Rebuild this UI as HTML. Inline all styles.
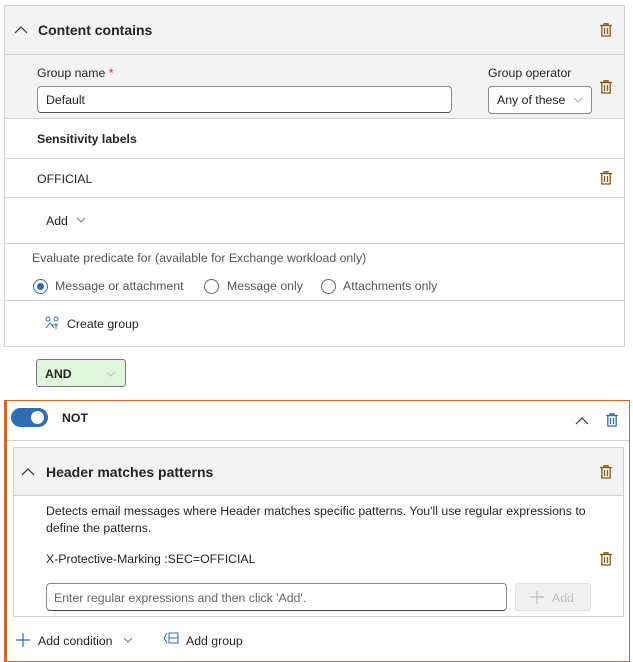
<!DOCTYPE html>
<html><head><style>
*{box-sizing:border-box;margin:0;padding:0}
body{width:633px;height:662px;background:#fff;font-family:"Liberation Sans",sans-serif;font-size:12.3px;color:#242424;position:relative;overflow:hidden}
.a{position:absolute}
.t{position:absolute;white-space:nowrap}
.ln{position:absolute;height:1px;background:#d1d1d1}
svg{position:absolute}
</style></head><body>
<div class="a" style="left:4px;top:5px;width:621px;height:342px;border:1px solid #d1d1d1"></div>
<div class="a" style="left:5px;top:6px;width:619px;height:112px;background:#f3f3f3"></div>
<div class="ln" style="left:5px;top:54px;width:619px"></div>
<svg style="left:14px;top:25px" width="14" height="10"><path d="M1 8 L7 2 L13 8" fill="none" stroke="#333" stroke-width="1.2"/></svg>
<div class="t" style="left:38px;top:22px;font-weight:bold;font-size:14px">Content contains</div>
<div class="t" style="left:37px;top:66px">Group name <span style="color:#c4314b">*</span></div>
<div class="a" style="left:37px;top:86px;width:415px;height:27px;border:1px solid #8a8a8a;border-bottom-color:#555;border-radius:4px;background:#fff"></div>
<div class="t" style="left:46px;top:93px">Default</div>
<div class="t" style="left:488px;top:66px">Group operator</div>
<div class="a" style="left:488px;top:86px;width:104px;height:28px;border:1px solid #8a8a8a;border-radius:4px;background:#fff"></div>
<div class="t" style="left:497px;top:93px">Any of these</div>
<svg style="left:573px;top:97px" width="10" height="6"><path d="M1 1 L5 5 L9 1" fill="none" stroke="#aaa"/></svg>
<div class="ln" style="left:5px;top:118px;width:619px"></div>
<div class="t" style="left:37px;top:132px;font-weight:bold">Sensitivity labels</div>
<div class="ln" style="left:5px;top:158px;width:619px"></div>
<div class="t" style="left:37px;top:172px">OFFICIAL</div>
<div class="ln" style="left:5px;top:197px;width:619px"></div>
<div class="t" style="left:46px;top:214px">Add</div>
<svg style="left:76px;top:217px" width="10" height="6"><path d="M1 1 L5 5 L9 1" fill="none" stroke="#777"/></svg>
<div class="ln" style="left:5px;top:243px;width:619px"></div>
<div class="t" style="left:32px;top:251px;color:#555">Evaluate predicate for (available for Exchange workload only)</div>
<div class="a" style="left:33px;top:279px;width:15px;height:15px;border:1px solid #2f6cb5;border-radius:50%"></div>
<div class="a" style="left:37px;top:283px;width:7px;height:7px;background:#2f6cb5;border-radius:50%"></div>
<div class="t" style="left:55px;top:279px;color:#555">Message or attachment</div>
<div class="a" style="left:204px;top:279px;width:15px;height:15px;border:1px solid #666;border-radius:50%"></div>
<div class="t" style="left:227px;top:279px;color:#555">Message only</div>
<div class="a" style="left:321px;top:279px;width:15px;height:15px;border:1px solid #666;border-radius:50%"></div>
<div class="t" style="left:343px;top:279px;color:#555">Attachments only</div>
<div class="ln" style="left:5px;top:300px;width:619px"></div>
<svg style="left:44px;top:316px" width="16" height="14"><g fill="none" stroke="#2f6cb5" stroke-width="1"><circle cx="4" cy="3" r="2"/><circle cx="12" cy="3" r="2"/><path d="M2 12 L6 7 L10 12 M8 9 H14 M12 7 V13"/></g></svg>
<div class="t" style="left:67px;top:317px">Create group</div>
<div class="a" style="left:36px;top:359px;width:90px;height:28px;background:#dff6dd;border:1px solid #7a7a7a;border-radius:3px"></div>
<div class="t" style="left:45px;top:367px;font-weight:bold">AND</div>
<svg style="left:106px;top:371px" width="10" height="6"><path d="M1 1 L5 5 L9 1" fill="none" stroke="#bbb"/></svg>
<div class="a" style="left:4px;top:400px;width:626px;height:262px;border:1px solid #d9661f;border-left:3px solid #d9661f"></div>
<div class="a" style="left:11px;top:408px;width:37px;height:19px;background:#2f6cb5;border-radius:10px"></div>
<div class="a" style="left:31px;top:411px;width:13px;height:13px;background:#fff;border-radius:50%"></div>
<div class="t" style="left:62px;top:411px;font-weight:bold">NOT</div>
<svg style="left:575px;top:416px" width="14" height="9"><path d="M1 8 L7 2 L13 8" fill="none" stroke="#333" stroke-width="1.2"/></svg>
<div class="ln" style="left:7px;top:440px;width:622px"></div>
<div class="a" style="left:13px;top:447px;width:611px;height:170px;border:1px solid #d1d1d1"></div>
<div class="a" style="left:14px;top:448px;width:609px;height:48px;background:#f3f3f3;border-bottom:1px solid #d1d1d1"></div>
<svg style="left:21px;top:467px" width="14" height="9"><path d="M1 8 L7 2 L13 8" fill="none" stroke="#333" stroke-width="1.2"/></svg>
<div class="t" style="left:46px;top:464px;font-weight:bold;font-size:14px">Header matches patterns</div>
<div class="t" style="left:46px;top:503px;line-height:17px">Detects email messages where Header matches specific patterns. You'll use regular expressions to<br>define the patterns.</div>
<div class="t" style="left:46px;top:552px">X-Protective-Marking :SEC=OFFICIAL</div>
<div class="a" style="left:46px;top:583px;width:461px;height:28px;border:1px solid #8a8a8a;border-bottom-color:#444;border-radius:4px"></div>
<div class="t" style="left:54px;top:591px;color:#666">Enter regular expressions and then click 'Add'.</div>
<div class="a" style="left:515px;top:583px;width:76px;height:28px;background:#f0f0f0;border:1px solid #e0e0e0;border-radius:3px"></div>
<svg style="left:530px;top:590px" width="14" height="14"><path d="M7 0 V14 M0 7 H14" stroke="#bdbdbd" stroke-width="1.2"/></svg>
<div class="t" style="left:552px;top:591px;color:#bdbdbd">Add</div>
<svg style="left:16px;top:633px" width="14" height="14"><path d="M7 0 V14 M0 7 H14" stroke="#2f6cb5" stroke-width="1.2"/></svg>
<div class="t" style="left:38px;top:634px">Add condition</div>
<svg style="left:123px;top:637px" width="10" height="6"><path d="M1 1 L5 5 L9 1" fill="none" stroke="#777"/></svg>
<svg style="left:163px;top:632px" width="16" height="12"><g fill="none" stroke="#2f6cb5"><path d="M4 1 L1 6 L4 11"/><rect x="6" y="1" width="9" height="10"/><path d="M6 6 H15"/></g></svg>
<div class="t" style="left:186px;top:634px">Add group</div>
<svg style="left:600px;top:23px" width="12" height="14"><g fill="none" stroke="#8b5a14" stroke-width="1.3"><path d="M0 2.5 H12 M4 2.5 V0.8 H8 V2.5"/><rect x="1.8" y="2.5" width="8.4" height="10.5"/><path d="M4.5 5 V11 M7.5 5 V11"/></g></svg>
<svg style="left:600px;top:80px" width="12" height="14"><g fill="none" stroke="#8b5a14" stroke-width="1.3"><path d="M0 2.5 H12 M4 2.5 V0.8 H8 V2.5"/><rect x="1.8" y="2.5" width="8.4" height="10.5"/><path d="M4.5 5 V11 M7.5 5 V11"/></g></svg>
<svg style="left:600px;top:171px" width="12" height="14"><g fill="none" stroke="#8b5a14" stroke-width="1.3"><path d="M0 2.5 H12 M4 2.5 V0.8 H8 V2.5"/><rect x="1.8" y="2.5" width="8.4" height="10.5"/><path d="M4.5 5 V11 M7.5 5 V11"/></g></svg>
<svg style="left:606px;top:413px" width="12" height="14"><g fill="none" stroke="#2f6cb5" stroke-width="1.3"><path d="M0 2.5 H12 M4 2.5 V0.8 H8 V2.5"/><rect x="1.8" y="2.5" width="8.4" height="10.5"/><path d="M4.5 5 V11 M7.5 5 V11"/></g></svg>
<svg style="left:600px;top:465px" width="12" height="14"><g fill="none" stroke="#8b5a14" stroke-width="1.3"><path d="M0 2.5 H12 M4 2.5 V0.8 H8 V2.5"/><rect x="1.8" y="2.5" width="8.4" height="10.5"/><path d="M4.5 5 V11 M7.5 5 V11"/></g></svg>
<svg style="left:600px;top:552px" width="12" height="14"><g fill="none" stroke="#8b5a14" stroke-width="1.3"><path d="M0 2.5 H12 M4 2.5 V0.8 H8 V2.5"/><rect x="1.8" y="2.5" width="8.4" height="10.5"/><path d="M4.5 5 V11 M7.5 5 V11"/></g></svg>
</body></html>
